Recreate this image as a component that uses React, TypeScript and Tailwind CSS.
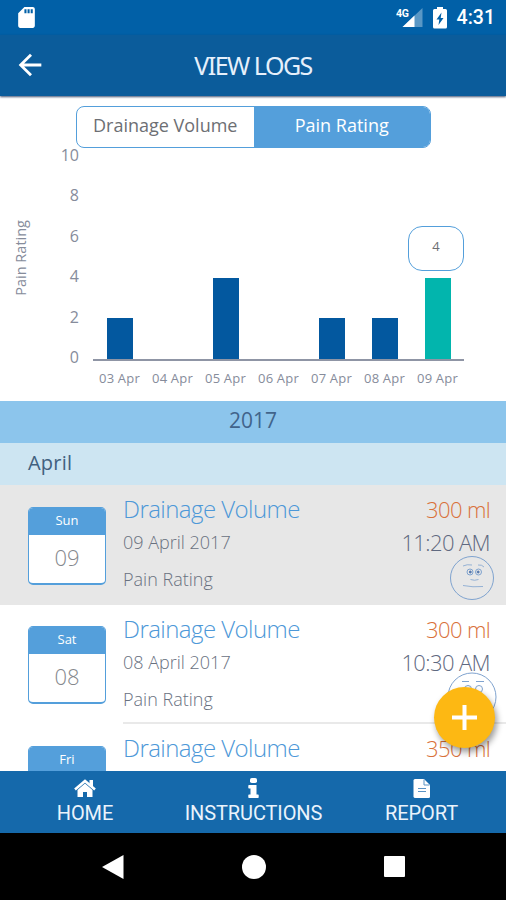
import React from 'react'
import { MdArrowBack, MdSdCard } from 'react-icons/md';

type Bar = {
    label: string;
    height: string;
    color: string;
    value?: number;
};

const bars: Bar[] = [
    { label: "03 Apr", height: "h-[41px]", color: "bg-[#03589f]" },
    { label: "04 Apr", height: "h-0", color: "bg-[#03589f]" },
    { label: "05 Apr", height: "h-[81px]", color: "bg-[#03589f]" },
    { label: "06 Apr", height: "h-0", color: "bg-[#03589f]" },
    { label: "07 Apr", height: "h-[41px]", color: "bg-[#03589f]" },
    { label: "08 Apr", height: "h-[41px]", color: "bg-[#03589f]" },
    { label: "09 Apr", height: "h-[81px]", color: "bg-[#02b5ad]", value: 4 },
];

const ticks = [10, 8, 6, 4, 2, 0];

type Log = {
    day: string;
    num?: string;
    date?: string;
    volume: string;
    time?: string;
    face?: "calm" | "sad";
    selected?: boolean;
};

const logs: Log[] = [
    { day: "Sun", num: "09", date: "09 April 2017", volume: "300 ml", time: "11:20 AM", face: "calm", selected: true },
    { day: "Sat", num: "08", date: "08 April 2017", volume: "300 ml", time: "10:30 AM", face: "sad" },
    { day: "Fri", volume: "350 ml" },
];

const StatusBar = () => {
    return (
        <div className="h-[35px] shrink-0 bg-[#0160a7] flex items-center pl-[14px] pr-[11px] text-white">
            <MdSdCard className="size-[25px]" />
            <div className="ml-auto flex items-center">
                <svg width="28" height="24" viewBox="0 0 28 24" className="mr-[9px]">
                    <text x="0" y="10.500" fontSize="10.500" fontWeight="700" fill="#fff" fontFamily="Roboto, sans-serif" textLength="13">4G</text>
                    <path d="M26.500 2v19H6.500z" fill="#fff" fillOpacity=".35" />
                    <path d="M18.500 9.600v11.400H6.500z" fill="#fff" />
                </svg>
                <svg width="14" height="22" viewBox="0 0 14 22" className="mr-[10px]">
                    <path d="M4 0h6v2h2.500Q14 2 14 3.500v16.500q0 1.500-1.500 1.500h-11Q0 21.500 0 20V3.500Q0 2 1.500 2H4z" fill="#fff" />
                    <path d="M8.500 5.500L3.500 12.500H6.300L5.500 18L10.500 11H7.700z" fill="#0160a7" />
                </svg>
                <span className="font-[Roboto,sans-serif] font-medium text-[19.500px] leading-6">4:31</span>
            </div>
        </div>
    );
};

const Header = () => {
    return (
        <header className="relative h-[61px] shrink-0 bg-[#0b5c9b] grid grid-cols-[60px_1fr_60px] items-center text-white shadow-[0_1px_2px_rgba(20,40,80,0.8)]">
            <MdArrowBack className="size-[34px] ml-[13px] -mt-px" />
            <h1 className="-mt-[2px] text-center leading-8 text-[#e6f0fb] font-['Noto_Sans','Open_Sans',sans-serif] text-[25px] tracking-[-1.5px]">VIEW LOGS</h1>
        </header>
    );
};

const Chart = () => {
    return (
        <section className="h-[305px] shrink-0 bg-white flex flex-col pt-[10px]">
            <div className="ml-[76px] w-[355px] h-[42px] grid grid-cols-2 border border-[#549fdb] rounded-[8px] overflow-hidden text-[18px] leading-[36px] text-center">
                <div className="text-[#6d6f74]">Drainage Volume</div>
                <div className="bg-[#549fdb] text-white font-medium">Pain Rating</div>
            </div>
            <div className="flex text-[#868c9b]">
                <div className="w-[42px] h-[219px] flex items-center justify-center">
                    <span className="-rotate-90 whitespace-nowrap text-[14.500px]">Pain Rating</span>
                </div>
                <div className="w-[37px] -mt-[13px] flex flex-col text-right text-[16px]">
                    {ticks.map((t) => (
                        <span key={t} className="h-[40.4px] leading-[40px]">{t}</span>
                    ))}
                </div>
                <div className="ml-[14px] w-[371px]">
                    <div className="h-[213px] flex items-end border-b-2 border-[#8f95a5]">
                        {bars.map((bar) => (
                            <div key={bar.label} className="relative flex-1 flex justify-center">
                                {bar.value && (
                                    <div className="absolute bottom-[88px] right-0 w-[56px] h-[45px] rounded-[14px] border border-[#549fdb] bg-white flex items-center justify-center text-[13px] text-[#6d6f74] pb-[3px]">
                                        {bar.value}
                                    </div>
                                )}
                                <div className={`w-[26px] ${bar.height} ${bar.color}`}></div>
                            </div>
                        ))}
                    </div>
                    <div className="flex pt-[7px] text-[13px] leading-[20px] text-center tracking-[0.2px]">
                        {bars.map((bar) => (
                            <span key={bar.label} className="flex-1 whitespace-nowrap">{bar.label}</span>
                        ))}
                    </div>
                </div>
            </div>
        </section>
    );
};

const CalmFace = () => {
    return (
        <svg width="46" height="46" viewBox="0 0 46 46" fill="none" stroke="#7fa3cf" strokeWidth="1">
            <circle cx="23" cy="23" r="21.500" />
            <path d="M14 11q4-2 9-1M29 10q4-.5 6 2" strokeWidth=".8" />
            <circle cx="21" cy="17" r="3" />
            <circle cx="29.500" cy="17" r="3" />
            <circle cx="21.300" cy="17" r="1" fill="#5577ad" stroke="#5577ad" />
            <circle cx="29.200" cy="17" r="1" fill="#5577ad" stroke="#5577ad" />
            <path d="M21.500 24.500q4 1.500 8 0M14 30.500q10 2 20 1" strokeWidth=".8" />
        </svg>
    );
};

const SadFace = () => {
    return (
        <svg width="50" height="50" viewBox="0 0 50 50" fill="none" stroke="#7fa3cf" strokeWidth="1">
            <circle cx="25" cy="25" r="24" />
            <path d="M15 9.500h7M29 9.500h8" />
            <circle cx="21" cy="17" r="3.500" />
            <circle cx="32" cy="17" r="3.500" />
            <path d="M16 36q9-6 18 0" />
        </svg>
    );
};

const LogRow = ({ log }: { log: Log }) => {
    return (
        <li className={`h-[119.5px] shrink-0 flex pl-[28px] ${log.selected ? "bg-[#e7e7e7]" : "bg-white"}`}>
            <div className="mt-[21.5px] w-[78px] h-[78px] rounded-[5px] border border-b-2 border-[#549fdb] bg-white overflow-hidden text-center">
                <div className="h-[27px] bg-[#549fdb] text-white text-[13px] leading-[24px]">{log.day}</div>
                <div className="text-[22px] font-light leading-[44px] text-[#85888d]">{log.num}</div>
            </div>
            <div className={`ml-[17px] flex-1 flex justify-between ${log.selected ? "" : "border-b-2 border-[#e9e9e9]"}`}>
                <div className="flex flex-col pt-[7px]">
                    <h3 className="mb-px text-[24px] leading-[34px] font-light tracking-[-0.55px] text-[#4d98d8]">Drainage Volume</h3>
                    <p className="text-[18px] leading-[30px] font-light text-[#69717f]">{log.date}</p>
                    <p className="mt-[7px] text-[18px] leading-[30px] font-light text-[#69717f]">{log.date && "Pain Rating"}</p>
                </div>
                <div className="flex flex-col items-end pt-[7px] pr-[16px]">
                    <span className="mb-px text-[22px] leading-[34px] font-light tracking-[-0.65px] text-[#d9713a]">{log.volume}</span>
                    <span className="text-[22px] leading-[30px] font-light tracking-[-0.6px] text-[#5f6980]">{log.time}</span>
                    {log.face === "calm" && <div className="-mt-[2px] -mr-[5px]"><CalmFace /></div>}
                    {log.face === "sad" && <div className="-mt-[5px] -mr-[7px] h-0"><SadFace /></div>}
                </div>
            </div>
        </li>
    );
};

const TabBar = () => {
    return (
        <nav className="h-[62px] shrink-0 bg-[#1569ab] flex text-[#eaf3fc] font-[Roboto,sans-serif] text-[20px] leading-[26px] tracking-[-0.1px]">
            <a className="w-[170px] flex flex-col items-center pt-[7px]">
                <svg width="22" height="19" viewBox="0 0 22 19" className="mt-px mb-[2px]" fill="none">
                    <path d="M1 10.500L11 2l10 8.500" stroke="#fff" strokeWidth="2.600" />
                    <path d="M15.500 1H19v7l-3.500-3z" fill="#fff" />
                    <path d="M11 4.600l7.500 6.300V18H13v-5H9v5H3.500v-7.100z" fill="#fff" />
                </svg>
                HOME
            </a>
            <a className="w-[167px] flex flex-col items-center pt-[7px]">
                <svg width="11" height="20" viewBox="0 0 11 20" className="mb-[2px]" fill="#fff">
                    <rect x="2" y="0" width="7" height="5" rx="1.800" />
                    <path d="M1 7h7.500v9.500H10q.7 0 .7.700v2q0 .8-.7.800H1q-.7 0-.7-.8v-2q0-.7.700-.7h1.500V10.500H1q-.7 0-.7-.7V7.700Q.3 7 1 7z" />
                </svg>
                INSTRUCTIONS
            </a>
            <a className="w-[169px] flex flex-col items-center pt-[7px]">
                <svg width="18" height="19" viewBox="0 0 18 19" className="mt-px mb-[2px]">
                    <path d="M2 0h9l6 6v11.500q0 1.500-1.500 1.500h-13Q.5 19 .5 17.500v-16Q.5 0 2 0z" fill="#fff" />
                    <path d="M11 .5v5.500h5.500M5 9.500h8M5 12.500h8" stroke="#5b93c4" fill="none" />
                </svg>
                REPORT
            </a>
        </nav>
    );
};

const SystemNav = () => {
    return (
        <div className="h-[67px] shrink-0 bg-black grid grid-cols-[140.5px] grid-flow-col auto-cols-[140.5px] pl-[43px] items-center justify-items-center">
            <svg width="22" height="24" viewBox="0 0 22 24"><path d="M21.500 0v24L0 12z" fill="#fff" /></svg>
            <div className="size-[24px] rounded-full bg-white"></div>
            <div className="size-[21px] rounded-[1px] bg-white"></div>
        </div>
    );
};

const App = () => {
    return (
        <div className="relative w-[506px] h-[900px] overflow-hidden flex flex-col bg-white font-['Open_Sans','Noto_Sans',sans-serif]">
            <StatusBar />
            <Header />
            <Chart />
            <div className="h-[42px] shrink-0 bg-[#8cc5ec] text-center text-[21px] leading-[39px] text-[#41648b]">2017</div>
            <div className="h-[42px] shrink-0 bg-[#cde5f2] pl-[28px] text-[20px] leading-[40px] text-[#41607f] tracking-[0.2px]">April</div>
            <ul className="h-[286px] shrink-0 overflow-hidden flex flex-col">
                {logs.map((log) => (
                    <LogRow key={log.day} log={log} />
                ))}
            </ul>
            <TabBar />
            <SystemNav />
            <button className="absolute left-[434px] top-[687px] size-[61px] rounded-full bg-[#fdb813] shadow-[2px_4px_6px_rgba(0,0,0,0.4)] flex items-center justify-center">
                <svg width="25" height="25" viewBox="0 0 25 25"><path d="M12.500 0v25M0 12.500h25" stroke="#fff" strokeWidth="4" /></svg>
            </button>
        </div>
    )
}

export default App
